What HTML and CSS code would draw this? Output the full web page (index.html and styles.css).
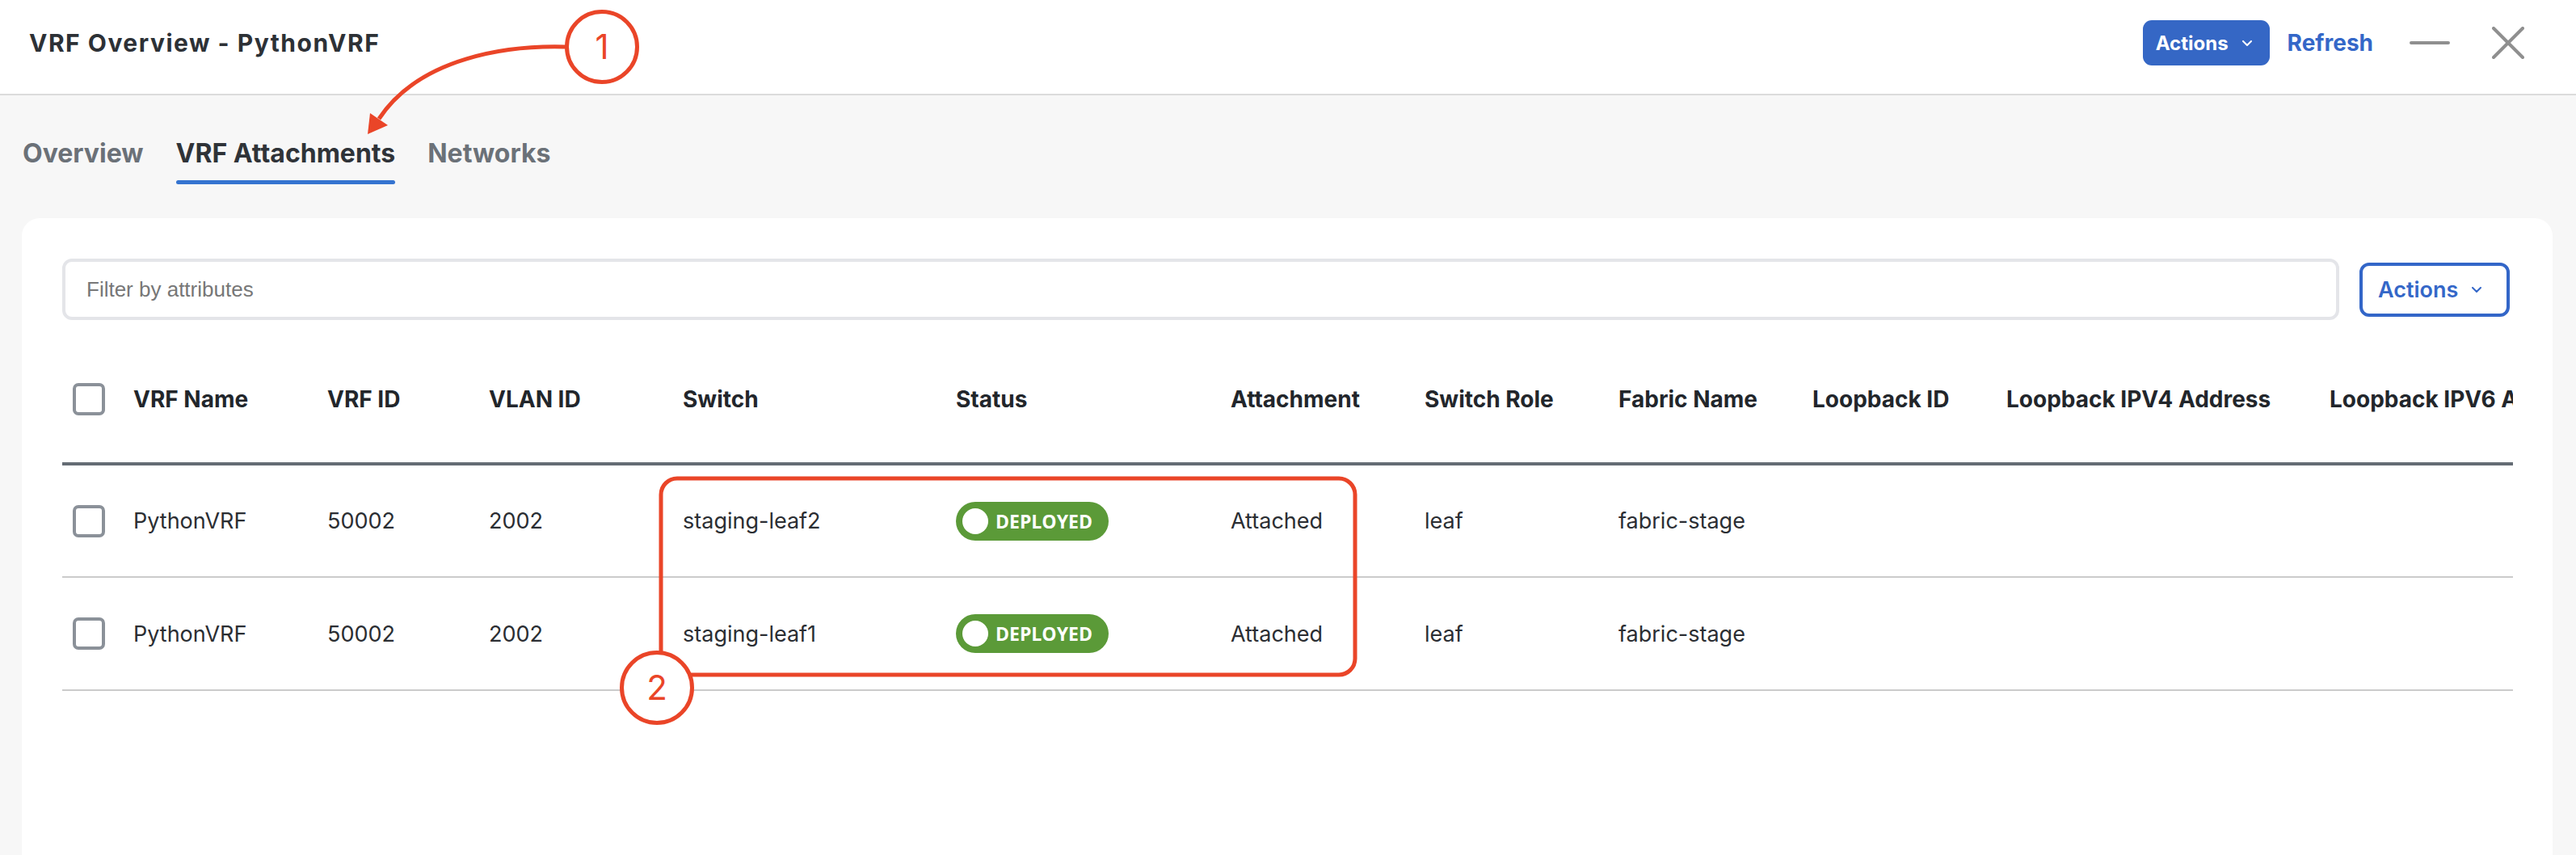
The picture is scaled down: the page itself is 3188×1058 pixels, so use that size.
FILE: index.html
```html
<!DOCTYPE html>
<html lang="en">
<head>
  <meta charset="UTF-8">
  <meta name="viewport" content="width=device-width, initial-scale=1">
  <title>VRF Overview - PythonVRF</title>
  <link rel="stylesheet" href="styles.css">
</head>
<body>
  <header class="topbar">
    <h1 class="title">VRF Overview - PythonVRF</h1>
    <div class="top-actions">
      <button class="btn-primary">Actions
        <svg class="chevron" viewBox="0 0 12 7"><polyline points="1,1 6,6 11,1" /></svg>
      </button>
      <a href="#" class="refresh">Refresh</a>
      <span class="minimize"></span>
      <svg class="close" viewBox="0 0 40 40">
        <line x1="2" y1="2" x2="38" y2="38" />
        <line x1="38" y1="2" x2="2" y2="38" />
      </svg>
    </div>
  </header>

  <nav class="tabs">
    <a href="#" class="tab">Overview</a>
    <a href="#" class="tab active">VRF Attachments</a>
    <a href="#" class="tab">Networks</a>
  </nav>

  <main class="card">
    <div class="toolbar">
      <input type="text" class="filter" placeholder="Filter by attributes">
      <button class="btn-outline">Actions
        <svg class="chevron" viewBox="0 0 12 7"><polyline points="1,1 6,6 11,1" /></svg>
      </button>
    </div>

    <div class="table-wrap">
      <table>
        <colgroup>
          <col class="w-check">
          <col class="w-240">
          <col class="w-200">
          <col class="w-240">
          <col class="w-338">
          <col class="w-340">
          <col class="w-240">
          <col class="w-240">
          <col class="w-240">
          <col class="w-240">
          <col class="w-400">
          <col class="w-400">
        </colgroup>
        <thead>
          <tr>
            <th class="check-cell"><span class="checkbox"></span></th>
            <th>VRF Name</th>
            <th>VRF ID</th>
            <th>VLAN ID</th>
            <th>Switch</th>
            <th>Status</th>
            <th>Attachment</th>
            <th>Switch Role</th>
            <th>Fabric Name</th>
            <th>Loopback ID</th>
            <th>Loopback IPV4 Address</th>
            <th>Loopback IPV6 Address</th>
          </tr>
        </thead>
        <tbody>
          <tr>
            <td class="check-cell"><span class="checkbox"></span></td>
            <td>PythonVRF</td>
            <td>50002</td>
            <td>2002</td>
            <td>staging-leaf2</td>
            <td><span class="status">DEPLOYED</span></td>
            <td>Attached</td>
            <td>leaf</td>
            <td>fabric-stage</td>
            <td></td>
            <td></td>
            <td></td>
          </tr>
          <tr>
            <td class="check-cell"><span class="checkbox"></span></td>
            <td>PythonVRF</td>
            <td>50002</td>
            <td>2002</td>
            <td>staging-leaf1</td>
            <td><span class="status">DEPLOYED</span></td>
            <td>Attached</td>
            <td>leaf</td>
            <td>fabric-stage</td>
            <td></td>
            <td></td>
            <td></td>
          </tr>
        </tbody>
      </table>
    </div>
  </main>

  <!-- callouts drawn over the screen -->
  <svg class="annotations" viewBox="0 0 3188 1058">
    <path class="callout-line" d="M 700 58 C 630 56, 520 70, 469 147" />
    <polygon class="callout-fill" points="455,166 458,140 480,155" />
    <circle class="callout-ring" cx="745" cy="58" r="43.5" />
    <text class="callout-num" x="745" y="73">1</text>

    <rect class="callout-line" x="818" y="592" width="859" height="243" rx="20" />
    <circle class="callout-ring" cx="813" cy="851" r="43.5" />
    <text class="callout-num" x="813" y="866">2</text>
  </svg>
</body>
</html>
```

FILE: styles.css
```css
* {
  box-sizing: border-box;
}
body {
  margin: 0;
  height: 1058px;
  overflow: hidden;
  position: relative;
  background: #f7f7f7;
  font-family: Inter, "Noto Sans", sans-serif;
}
.topbar {
  display: flex;
  justify-content: space-between;
  align-items: center;
  height: 118px;
  padding: 0 64px 10px 36px;
  background: #fff;
  border-bottom: 2px solid #dcdcdc;
}
.title {
  margin: 0;
  font-size: 30px;
  font-weight: 700;
  letter-spacing: 1.5px;
  color: #2d3136;
}
.top-actions {
  display: flex;
  align-items: center;
}
.btn-primary {
  display: flex;
  align-items: center;
  gap: 17px;
  height: 56px;
  padding: 0 22px 0 16px;
  background: #3567c5;
  color: #fff;
  border: none;
  border-radius: 11px;
  font-family: Inter, sans-serif;
  font-size: 24px;
  font-weight: 700;
}
.chevron {
  width: 12px;
  height: 7px;
  fill: none;
  stroke: currentColor;
  stroke-width: 2;
  stroke-linecap: round;
  stroke-linejoin: round;
}
.refresh {
  margin-left: 22px;
  font-size: 28px;
  font-weight: 700;
  color: #3467c8;
  text-decoration: none;
}
.minimize {
  margin-left: 45px;
  width: 50px;
  height: 4px;
  border-radius: 2px;
  background: #8f8f8f;
}
.close {
  margin-left: 52px;
  width: 40px;
  height: 40px;
  stroke: #8f8f8f;
  stroke-width: 4;
  stroke-linecap: round;
}
.tabs {
  display: flex;
  gap: 40px;
  padding: 54px 0 0 28px;
}
.tab {
  font-size: 32px;
  font-weight: 700;
  line-height: 36px;
  color: #6b7178;
  text-decoration: none;
}
.tab::after {
  content: "";
  display: block;
  height: 5px;
  margin-top: 15px;
  border-radius: 3px;
}
.tab.active {
  color: #2f3338;
}
.tab.active::after {
  background: #3574d0;
}
.card {
  height: 800px;
  margin: 42px 29px 0 27px;
  padding: 50px 53px 0 50px;
  background: #fff;
  border-radius: 22px 22px 0 0;
}
.toolbar {
  display: flex;
  align-items: center;
  gap: 25px;
}
.filter {
  flex: 1;
  height: 76px;
  padding: 0 26px;
  border: 4px solid #e4e5e9;
  border-radius: 12px;
  font-family: "Liberation Sans", Arial, sans-serif;
  font-size: 26px;
  color: #333;
  outline: none;
}
.filter::placeholder {
  color: #777;
}
.btn-outline {
  display: flex;
  align-items: center;
  gap: 17px;
  width: 186px;
  height: 67px;
  padding: 0 0 0 19px;
  background: #fff;
  color: #3467c8;
  border: 4px solid #3366c8;
  border-radius: 12px;
  font-family: Inter, sans-serif;
  font-size: 27px;
  font-weight: 600;
}
.table-wrap {
  margin-top: 20px;
  margin-right: -4px;
  overflow: hidden;
}
table {
  width: 3206px;
  table-layout: fixed;
  border-collapse: collapse;
}
.w-check { width: 88px; }
.w-200 { width: 200px; }
.w-240 { width: 240px; }
.w-338 { width: 338px; }
.w-340 { width: 340px; }
.w-400 { width: 400px; }
th {
  height: 158px;
  padding: 0;
  text-align: left;
  font-size: 28px;
  font-weight: 700;
  color: #22262b;
  white-space: nowrap;
  overflow: hidden;
  border-bottom: 4px solid #646c74;
}
td {
  height: 140px;
  padding: 0;
  font-size: 27px;
  color: #2b2e33;
  white-space: nowrap;
  border-bottom: 2px solid #cbcbcb;
}
.check-cell {
  padding-left: 13px;
}
.checkbox {
  display: block;
  width: 40px;
  height: 40px;
  background: #fff;
  border: 4px solid #8b9199;
  border-radius: 7px;
}
.status {
  display: inline-flex;
  align-items: center;
  gap: 9px;
  width: 189px;
  height: 48px;
  padding-left: 8px;
  vertical-align: middle;
  background: #5b9a38;
  border-radius: 24px;
  color: #fff;
  font-family: "Open Sans", sans-serif;
  font-size: 23px;
  font-weight: 700;
}
.status::before {
  content: "";
  width: 32px;
  height: 32px;
  border-radius: 50%;
  background: #fff;
}
.annotations {
  position: absolute;
  top: 0;
  left: 0;
  width: 3188px;
  height: 1058px;
  pointer-events: none;
}
.callout-line {
  fill: none;
  stroke: #ea4528;
  stroke-width: 5;
}
.callout-fill {
  fill: #ea4528;
}
.callout-ring {
  fill: #fff;
  stroke: #ea4528;
  stroke-width: 5;
}
.callout-num {
  fill: #ea4528;
  font-family: Inter, sans-serif;
  font-size: 42px;
  text-anchor: middle;
}
```
